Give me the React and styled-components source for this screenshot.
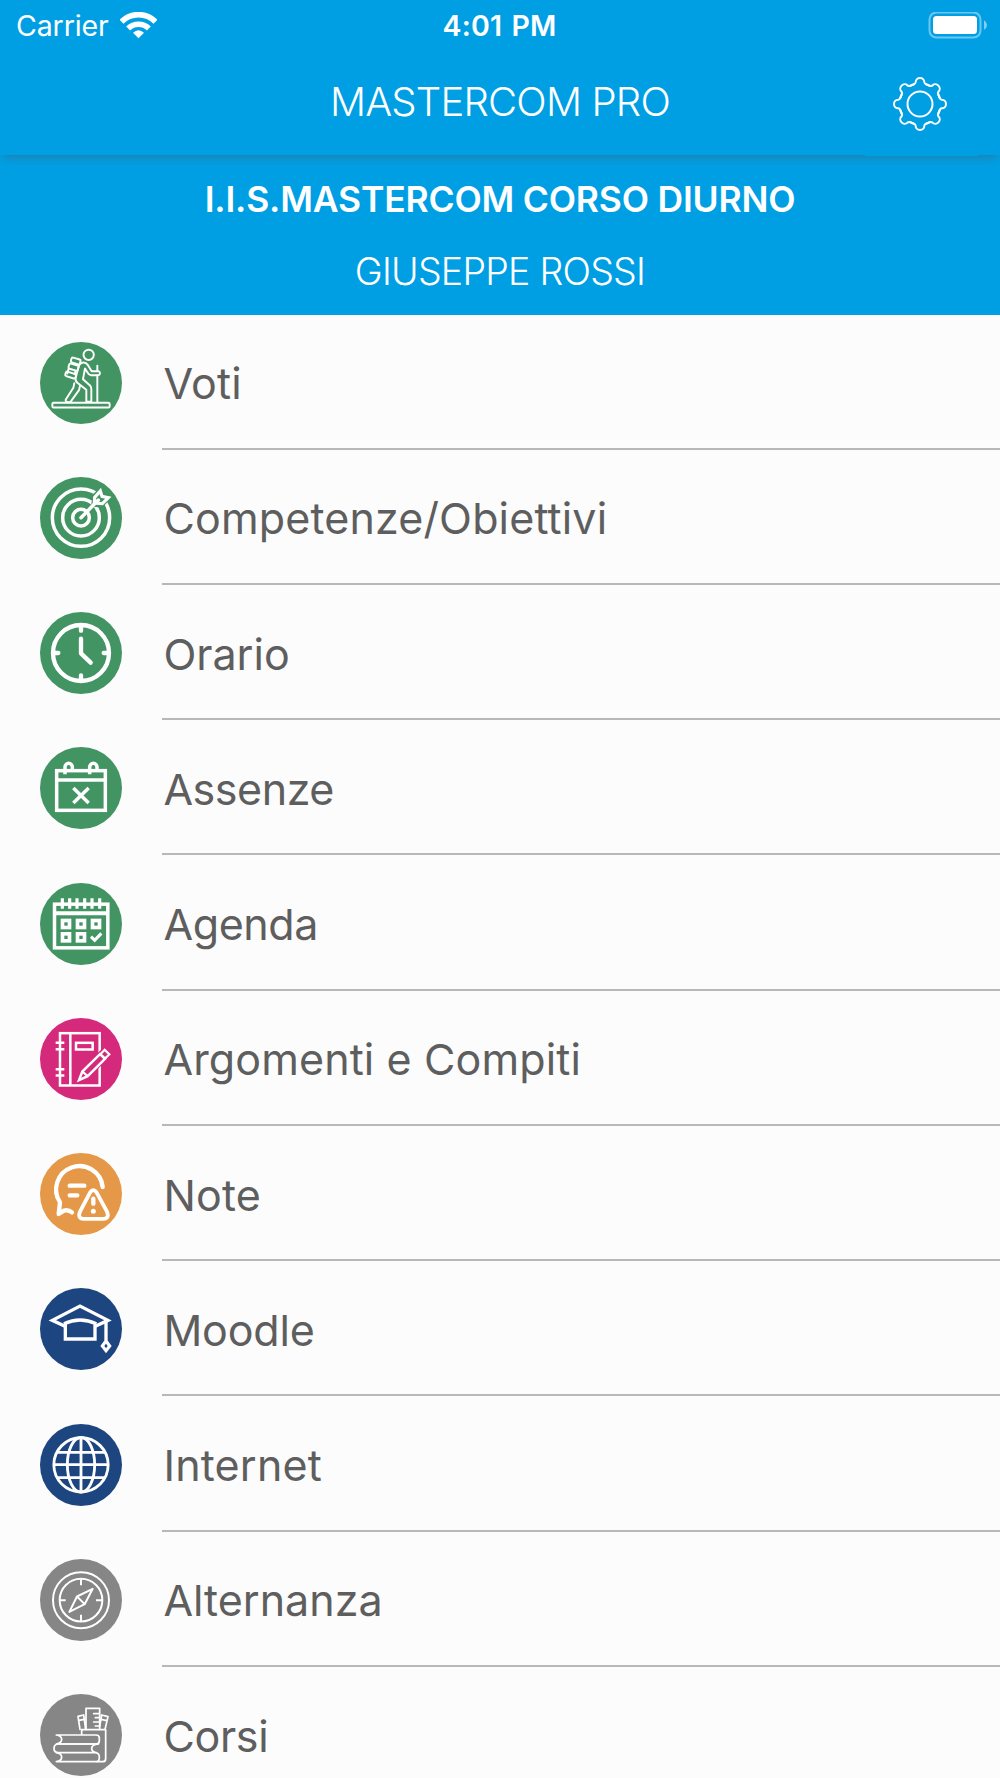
import React from "react";
import styled, { createGlobalStyle } from "styled-components";

const GlobalStyle = createGlobalStyle`
  * { box-sizing: border-box; }
  html, body { margin: 0; padding: 0; background: #fcfcfc; }
  body { font-family: Inter, Roboto, "Liberation Sans", sans-serif; }
`;

const BLUE = "#009fe4";
const GREEN = "#439463";
const PINK = "#d52a7c";
const ORANGE = "#e59847";
const NAVY = "#1d457f";
const GREY = "#868686";

const Screen = styled.div`
  width: 1000px;
  height: 1778px;
  overflow: hidden;
  background: #fcfcfc;
  display: flex;
  flex-direction: column;
`;

const TopBar = styled.header`
  position: relative;
  flex: none;
  height: 155px;
  background: ${BLUE};
  color: #fff;
  box-shadow: 0 6px 8px -3px rgba(75, 85, 90, 0.38);
`;

const StatusBar = styled.div`
  height: 50px;
  display: grid;
  grid-template-columns: 1fr auto 1fr;
  align-items: center;
  padding: 1px 12px 0;
  font-size: 28.5px;
  line-height: 34px;
`;

const Carrier = styled.div`
  display: flex;
  align-items: center;
  gap: 11px;
  padding-left: 4px;
  letter-spacing: -0.1px;
`;

const Clock = styled.div`
  padding-right: 1px;
  font-weight: 600;
  letter-spacing: 0.15px;
  word-spacing: 2px;
`;

const BatterySlot = styled.div`
  display: flex;
  justify-content: flex-end;
`;

const TitleRow = styled.div`
  height: 106px;
  display: grid;
  grid-template-columns: 1fr auto 1fr;
  align-items: center;
`;

const Title = styled.h1`
  grid-column: 2;
  margin: 0 0 3px;
  font-size: 40px;
  font-weight: 300;
  line-height: 50px;
  letter-spacing: -0.8px;
`;

const SettingsButton = styled.button`
  justify-self: end;
  width: 113px;
  height: 106px;
  margin-right: 22px;
  padding: 2px 3px 0 0;
  border: 0;
  background: ${BLUE};
  color: #fff;
  display: grid;
  place-items: center;
`;

const Profile = styled.section`
  flex: none;
  height: 160px;
  padding-top: 18px;
  background: ${BLUE};
  color: #fff;
  text-align: center;
`;

const School = styled.div`
  font-size: 35.5px;
  font-weight: 600;
  line-height: 54px;
  letter-spacing: -0.2px;
`;

const Student = styled.div`
  margin-top: 18px;
  font-size: 37.5px;
  font-weight: 350;
  line-height: 54px;
  letter-spacing: -0.75px;
`;

const Menu = styled.nav`
  display: flex;
  flex-direction: column;
  margin-top: -0.6px;
`;

const MenuItem = styled.div`
  flex: none;
  height: 135.25px;
  display: flex;
  padding-left: 40.4px;
`;

const Badge = styled.div`
  flex: none;
  width: 82px;
  height: 82px;
  margin: 27.1px 40px 0 0;
  border-radius: 50%;
  background: ${(p) => p.$color};
`;

const Label = styled.div`
  flex: 1;
  border-bottom: 2px solid #b8b8b8;
  padding: 41.6px 0 0 1px;
  font-size: 43px;
  line-height: 54px;
  letter-spacing: ${(p) => p.$tracking}px;
  color: #5e5e5e;
`;

const Glyph = styled.svg`
  display: block;
  width: 82px;
  height: 82px;
  fill: none;
  stroke: #fff;
`;

function Icon({ cy, children, ...rest }) {
  return (
    <Glyph viewBox={`31 ${cy - 123} 246 246`} {...rest}>
      {children}
    </Glyph>
  );
}

const Hiker = () => (
  <Icon cy={157.5} strokeWidth="5.8" strokeLinejoin="round" strokeLinecap="round">
    <circle cx="177" cy="73" r="15.5" />
    <rect x="-14" y="-8" width="28" height="15" rx="4" transform="translate(138 92) rotate(16)" />
    <rect x="-15" y="-8" width="29" height="16" rx="4" transform="translate(132 110) rotate(16)" />
    <rect x="-17" y="-7" width="32" height="14" rx="4" transform="translate(124 134) rotate(18)" />
    <path d="M116 117l-3 12M137 124l-2 7" />
    <path d="M154 98Q166 92 175 104L186 122H206Q211 123 211 129Q210 134 205 134H184Q178 134 174 127L166 114L160 146L181 165Q185 169 185 176V214H170V178L143 157Q136 151 138 142L146 112Q148 102 154 98Z" />
    <path d="M134 158L131 172L108 208Q107 214 115 215H122L148 179L151 166" />
    <path d="M203 106V121M203 135V215" />
    <rect x="68" y="217" width="172" height="14" rx="4" />
  </Icon>
);

const Target = () => (
  <Icon cy={159} strokeWidth="10.5">
    <circle cx="154" cy="158" r="86" />
    <circle cx="154" cy="158" r="55" />
    <circle cx="154" cy="158" r="25" />
    <path d="M194 89L214 71L219 93L242 97L217 123L188 122Z" fill={GREEN} stroke={GREEN} strokeWidth="8" />
    <path d="M154 158L206 105" strokeLinecap="round" />
    <path d="M195 97L212 78L217 94L236 98L218 116L194 114Z" strokeWidth="9.5" />
  </Icon>
);

const ClockIcon = () => (
  <Icon cy={159} strokeWidth="13" strokeLinecap="round" strokeLinejoin="round">
    <circle cx="154" cy="159" r="84" />
    <path d="M154 78V92M154 226V240M73 159H86M222 159H235" />
    <path d="M154 116V160L183 188" />
  </Icon>
);

const Absence = () => (
  <Icon cy={565} strokeWidth="10.5">
    <rect x="81" y="513" width="146" height="119" />
    <path d="M81 541H227" />
    <path d="M106 524V502a11 11 0 0 1 22 0V512M180 524V502a11 11 0 0 1 22 0V512" />
    <path d="M131 565L177 610M177 565L131 610" />
  </Icon>
);

const BOXES = [[109, 161], [154, 161], [199, 161], [109, 201], [154, 201]];

const Agenda = () => (
  <Icon cy={161} strokeWidth="10.5">
    <rect x="74.5" y="101.5" width="160" height="131" />
    <path d="M74 129H235" strokeWidth="12" />
    <path d="M98 84V115M120 84V115M142 84V115M165 84V115M187 84V115M210 84V115" strokeWidth="9.5" />
    {BOXES.map(([x, y]) => (
      <rect key={`${x}-${y}`} x={x - 10.5} y={y - 10.5} width="21" height="21" strokeWidth="11" />
    ))}
    <path d="M184 199L195 210L215 189" strokeWidth="9.5" />
  </Icon>
);

const Notebook = () => (
  <Icon cy={566.5} strokeWidth="7.5">
    <rect x="91" y="489" width="119" height="157" />
    <path d="M122 489V646M78 518H104M78 537H104M78 597H104M78 616H104" />
    <rect x="139" y="518" width="50" height="20" />
    <path d="M150 628L158 603L225 538L240 552L174 617Z" fill={PINK} stroke={PINK} strokeWidth="14" />
    <path d="M148 630L158 604L211 552L226 566L174 618Z" />
    <path d="M212 552L225 539L239 552L226 565ZM158 604L174 618" strokeWidth="6.5" />
  </Icon>
);

const NoteIcon = () => (
  <Icon cy={162} strokeWidth="13" strokeLinecap="round" strokeLinejoin="round">
    <path d="M219 141A70 70 0 1 0 91 187L87 222L103 212Q116 208 127 217" />
    <path d="M120 137H164M120 166H143" />
    <path d="M181 158Q191 143 201 158L232 215Q240 235 221 236.500H162Q143 235 151 215Z" strokeWidth="11.5" />
    <path d="M191 176V191" />
    <circle cx="191" cy="214" r="7.500" fill="#fff" stroke="none" />
  </Icon>
);

const Graduation = () => (
  <Icon cy={568} strokeWidth="10">
    <path d="M106 560L68 542L151 499L235 542L197 560" />
    <path d="M107 551V598H196V551M103 552Q151 530 200 552" />
    <path d="M229 546V602" />
    <path d="M229 604L240 619L229 633L218 619Z" strokeWidth="9.5" />
  </Icon>
);

const Globe = () => (
  <Icon cy={164} strokeWidth="8.5">
    <circle cx="154" cy="163.500" r="81.500" />
    <ellipse cx="154" cy="163.500" rx="41" ry="82" />
    <path d="M154 82V246M72 163H236M81 126H227M81 202H227" />
  </Icon>
);

const Compass = () => (
  <Icon cy={569.5} strokeWidth="6">
    <circle cx="154" cy="570" r="84" />
    <circle cx="154" cy="570" r="64" />
    <path d="M154 507V525M154 614V633M90 570H108M199 570H218" />
    <path d="M189 536L165 582L119 605L142 559ZM142 559L165 582" strokeLinejoin="round" />
  </Icon>
);

const Books = () => (
  <Icon cy={165} strokeWidth="5.2" strokeLinecap="round" strokeLinejoin="round">
    <path d="M80 165H199Q209 165 209 174V182Q209 192 199 192H80Q96 190 96 178Q96 167 80 165Z" />
    <path d="M206 192H86Q73 193 73 205Q73 218 86 218H199Q186 216 186 205Q186 194 206 192Z" />
    <path d="M80 218Q96 220 96 232Q96 243 80 245H219Q228 245 228 236V149H156V163" />
    <path d="M199 218Q209 220 209 232Q209 244 202 245" />
    <path d="M169 148V85H210V148M192 101H209M197 113H209M192 126H209M197 138H209" />
    <path d="M151 148L145 109L162 105L168 148M148 121L163 118M226 148L235 110L216 105L210 140M215 118L231 122" />
  </Icon>
);

const GearShape = styled.svg`
  display: block;
  width: 56px;
  height: 56px;
  fill: none;
  stroke: currentColor;
  stroke-width: 6;
  stroke-linejoin: round;
`;

// Eight identical teeth, each one rotated by 45 degrees about the hub.
const TOOTH = "M-30.400 -54.400L-17 -59.500Q-13.500 -61 -13 -66A13 12 0 0 1 13 -66Q13.500 -61 17 -59.500L30.400 -54.400";

const Gear = () => (
  <GearShape viewBox="-84 -84 168 168">
    <circle r="37.500" />
    {Array.from({ length: 8 }, (_, i) => (
      <path key={i} d={TOOTH} transform={`rotate(${i * 45})`} />
    ))}
  </GearShape>
);

const Wifi = () => (
  <svg width="37" height="28" viewBox="360 32 111 84" fill="none" stroke="#fff" strokeWidth="17">
    <path d="M364.500 61A72.500 72.500 0 0 1 466.500 61" />
    <path d="M384.500 81.500A44 44 0 0 1 446.500 81.500" />
    <path d="M399 94Q415.500 79 432 94L415.500 111Z" fill="#fff" stroke="none" />
  </svg>
);

const Battery = () => (
  <svg width="60" height="28" viewBox="0 0 60 28">
    <rect x="1.500" y="0.500" width="51" height="25" rx="7" fill="none" stroke="#fff" strokeOpacity="0.42" strokeWidth="2" />
    <rect x="5" y="4" width="44" height="18" rx="3.500" fill="#fff" />
    <path d="M56 8.300Q59 10 59 13T56 17.700Z" fill="#fff" fillOpacity="0.5" />
  </svg>
);

const ITEMS = [
  { label: "Voti", color: GREEN, Art: Hiker, tracking: 0.2 },
  { label: "Competenze/Obiettivi", color: GREEN, Art: Target, tracking: 0.15 },
  { label: "Orario", color: GREEN, Art: ClockIcon, tracking: 0 },
  { label: "Assenze", color: GREEN, Art: Absence, tracking: -0.45 },
  { label: "Agenda", color: GREEN, Art: Agenda, tracking: -0.4 },
  { label: "Argomenti e Compiti", color: PINK, Art: Notebook, tracking: 0.12 },
  { label: "Note", color: ORANGE, Art: NoteIcon, tracking: 0.2 },
  { label: "Moodle", color: NAVY, Art: Graduation, tracking: -0.15 },
  { label: "Internet", color: NAVY, Art: Globe, tracking: 0.2 },
  { label: "Alternanza", color: GREY, Art: Compass, tracking: 0 },
  { label: "Corsi", color: GREY, Art: Books, tracking: -0.3 },
];

export default function App() {
  return (
    <>
      <GlobalStyle />
      <Screen>
        <TopBar>
          <StatusBar>
            <Carrier>
              <span>Carrier</span>
              <Wifi />
            </Carrier>
            <Clock>4:01 PM</Clock>
            <BatterySlot>
              <Battery />
            </BatterySlot>
          </StatusBar>
          <TitleRow>
            <Title>MASTERCOM PRO</Title>
            <SettingsButton aria-label="Impostazioni">
              <Gear />
            </SettingsButton>
          </TitleRow>
        </TopBar>
        <Profile>
          <School>I.I.S.MASTERCOM CORSO DIURNO</School>
          <Student>GIUSEPPE ROSSI</Student>
        </Profile>
        <Menu>
          {ITEMS.map(({ label, color, Art, tracking }) => (
            <MenuItem key={label}>
              <Badge $color={color}>
                <Art />
              </Badge>
              <Label $tracking={tracking}>{label}</Label>
            </MenuItem>
          ))}
        </Menu>
      </Screen>
    </>
  );
}
